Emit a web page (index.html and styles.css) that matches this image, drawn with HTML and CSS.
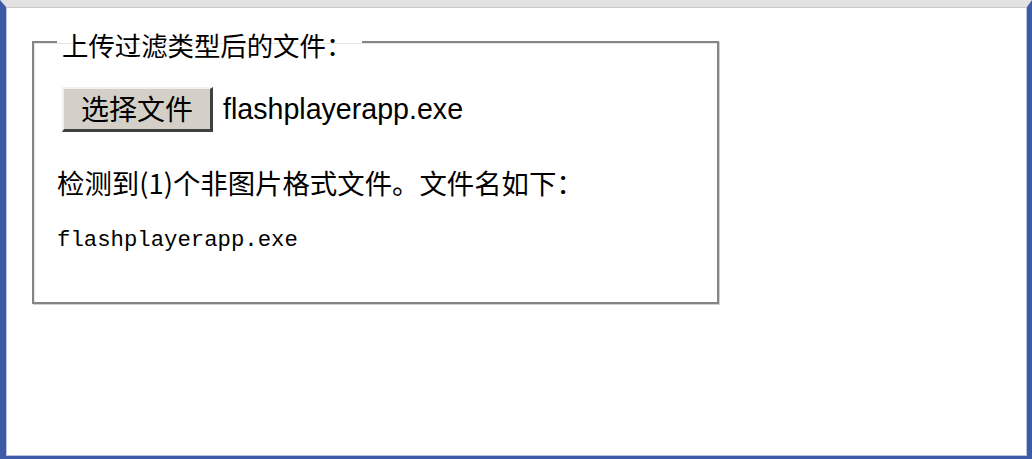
FILE: index.html
```html
<!DOCTYPE html>
<html lang="zh-CN">
<head>
<meta charset="utf-8">
<title>上传过滤类型后的文件</title>
<link rel="stylesheet" href="styles.css">
</head>
<body>
<div class="frame">
  <fieldset class="box">
    <legend class="box-title">上传过滤类型后的文件：</legend>
    <div class="file-row">
      <span class="file-btn">选择文件</span>
      <span class="file-name">flashplayerapp.exe</span>
    </div>
    <p class="detect">检测到(1)个非图片格式文件。文件名如下：</p>
    <p class="mono">flashplayerapp.exe</p>
  </fieldset>
</div>
</body>
</html>
```

FILE: styles.css
```css
html, body {
  margin: 0;
  padding: 0;
  background: #ffffff;
}

.frame {
  width: 1032px;
  height: 459px;
  box-sizing: border-box;
  background: #ffffff;
  border-top: 7px solid #e2e2e2;
  border-left: 6px solid #3c5aa6;
  border-right: 5px solid #3c5aa6;
  border-bottom: 3px solid #3c5aa6;
  box-shadow: inset 0 1px 0 #c9c9c9, inset 1px 0 0 #b9c4e2, inset -1px 0 0 #b9c4e2, inset 0 -1px 0 #b9c4e2;
  padding-top: 17px;
  font-family: "Noto Sans CJK SC", "Liberation Sans", sans-serif;
  color: #000;
}

.box {
  margin: 0 0 0 26px;
  width: 687px;
  box-sizing: border-box;
  border: 2px solid #858585;
  box-shadow: 1px 1px 0 #cfcfcf, inset 1px 1px 0 #e6e6e6;
  padding: 0 23px 47px 23px;
  min-inline-size: 0;
}

.box-title {
  font-family: "Noto Sans CJK SC", sans-serif;
  font-size: 26.4px;
  line-height: 28px;
  padding: 7px 10px 0 5px;
  margin: 0;
}

.file-row {
  display: flex;
  align-items: center;
  margin: 28px 0 0 5px;
  height: 45px;
}

.file-btn {
  box-sizing: border-box;
  width: 151px;
  height: 45px;
  display: flex;
  align-items: center;
  justify-content: center;
  background: #d4d0c8;
  border-top: 2px solid #f2f1ee;
  border-left: 2px solid #f2f1ee;
  border-right: 3px solid #404040;
  border-bottom: 3px solid #404040;
  font-family: "Noto Sans CJK SC", sans-serif;
  font-size: 28px;
  line-height: 1;
  padding-bottom: 2px;
}

.file-name {
  margin-left: 10px;
  font-family: "Liberation Sans", Arial, sans-serif;
  font-size: 28.6px;
  line-height: 45px;
}

.detect {
  margin: 32px 0 0 0;
  font-family: "Noto Sans CJK SC", sans-serif;
  font-size: 27.4px;
  line-height: 36px;
}

.mono {
  margin: 25px 0 0 0;
  font-family: "Liberation Mono", monospace;
  font-size: 22.3px;
  line-height: 30px;
}
```
